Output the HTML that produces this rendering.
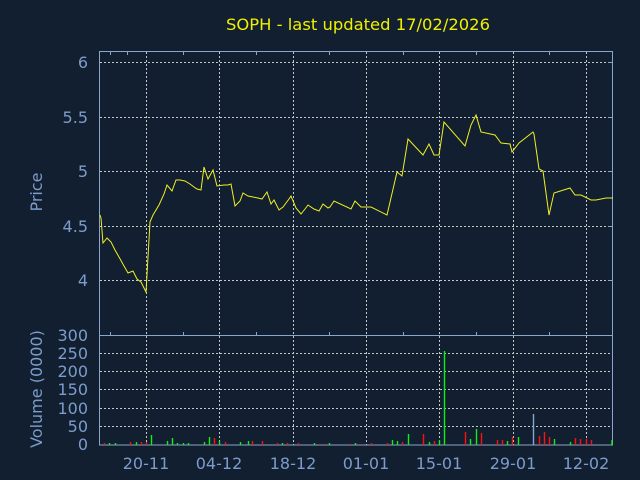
<!DOCTYPE html>
<html><head><meta charset="utf-8"><style>
html,body{margin:0;padding:0;background:#111f30;}
svg{display:block}
text{font-family:"DejaVu Sans","Liberation Sans",sans-serif;}
</style></head><body>
<svg width="640" height="480" viewBox="0 0 640 480" xmlns="http://www.w3.org/2000/svg">
<rect width="640" height="480" fill="#111f30"/>
<text x="358" y="30" fill="#f0f000" font-size="16" text-anchor="middle" textLength="264" lengthAdjust="spacingAndGlyphs">SOPH - last updated 17/02/2026</text>
<g stroke="#c8c8c8" stroke-width="1" stroke-dasharray="2,2" fill="none">
<path d="M100 62.5H613M100 117.5H613M100 171.5H613M100 226.5H613M100 280.5H613"/>
<path d="M100 353.5H613M100 371.5H613M100 389.5H613M100 408.5H613M100 426.5H613"/>
<path d="M146.5 52V445M219.5 52V445M293.5 52V445M366.5 52V445M439.5 52V445M513.5 52V445M586.5 52V445"/>
</g>
<g stroke="#8aa6cc" stroke-width="1" fill="none">
<rect x="99.5" y="51.5" width="513" height="393.5"/>
<path d="M99.5 335.5H612.5"/>
<path d="M110.5 52v3M127.5 52v3M183.5 52v3M256.5 52v3M329.5 52v3M403.5 52v3M476.5 52v3M549.5 52v3M110.5 335v-3M183.5 335v-3M256.5 335v-3M329.5 335v-3M403.5 335v-3M476.5 335v-3M549.5 335v-3"/>
<path d="M608 62.5h5M608 117.5h5M608 171.5h5M608 226.5h5M608 280.5h5"/>
</g>
<polyline fill="none" stroke="#f0f020" stroke-width="1" points="100,215 101,218 103,243 107,238 111,242 115,250 119,257 124,266 128,273 133,271 137,279 141,282 146,292 150,222 153,215 159,205 164,194 167,185 172,191 176,180 180,180 185,181 190,184 194,187 197,189 201,190 204,167 208,179 213,170 217,186 224,185 228,185 231,184 235,206 240,201 243,193 248,196 253,197 258,198 262,199 267,192 271,204 274,200 279,210 283,207 289,199 291,196 296,208 301,214 305,209 308,205 314,209 319,211 323,204 328,208 330,207 334,201 351,209 355,201 361,207 371,207 387,215 397,172 402,176 408,139 423,155 429,144 434,155 439,155 444,122 465,146 471,125 476,115 481,132 495,135 501,143 510,144 512,152 519,143 533,132 534,134 539,169 543,171 549,215 554,193 570,188 575,195 581,195 591,200 596,200 606,198 613,198"/>
<g stroke-width="1.4">
<g stroke="#ff1010">
<path d="M104.5 443V445M130.5 442V445M141.5 442V445M146.5 442V445M214.5 438V445M225.5 442V445M252.5 441V445M262.5 441V445M277.5 443V445M287.5 443V445M298.5 443V445M319.5 444V445M324.5 444V445M350.5 444V445M361.5 444V445M371.5 443V445M387.5 443V445M402.5 442V445M423.5 434V445M434.5 441V445M465.5 432V445M481.5 433V445M497.5 440V445M502.5 440V445M512.5 437V445M539.5 436V445M544.5 432V445M549.5 437V445M575.5 438V445M580.5 439V445M586.5 439V445M591.5 440V445"/>
</g>
<g stroke="#10f010">
<path d="M109.5 443V445M115.5 443V445M136.5 442V445M151.5 435V445M167.5 441V445M172.5 438V445M177.5 443V445M183.5 443V445M188.5 443V445M204.5 442V445M209.5 437V445M219.5 441V445M240.5 442V445M248.5 441V445M282.5 443V445M314.5 443V445M329.5 443V445M355.5 443V445M392.5 440V445M397.5 441V445M408.5 434V445M429.5 442V445M439.5 440V445M444.5 351V445M470.5 439V445M476.5 429V445M507.5 441V445M518.5 437V445M554.5 439V445M570.5 442V445M612 440V445"/>
</g>
<path stroke="#8aa6cc" d="M533.5 414V445"/>
</g>
<g fill="#7d9ccb" font-size="16" text-anchor="end">
<text x="88" y="68">6</text>
<text x="88" y="123">5.5</text>
<text x="88" y="177">5</text>
<text x="88" y="232">4.5</text>
<text x="88" y="286">4</text>
<text x="88" y="341">300</text>
<text x="88" y="359">250</text>
<text x="88" y="377">200</text>
<text x="88" y="395">150</text>
<text x="88" y="414">100</text>
<text x="88" y="432">50</text>
<text x="88" y="450">0</text>
</g>
<g fill="#7d9ccb" font-size="16" text-anchor="middle">
<text x="146" y="469">20-11</text>
<text x="219" y="469">04-12</text>
<text x="293" y="469">18-12</text>
<text x="366" y="469">01-01</text>
<text x="439" y="469">15-01</text>
<text x="513" y="469">29-01</text>
<text x="586" y="469">12-02</text>
<text transform="translate(42,192) rotate(-90)">Price</text>
<text transform="translate(42,389) rotate(-90)">Volume (0000)</text>
</g>
</svg>
</body></html>
